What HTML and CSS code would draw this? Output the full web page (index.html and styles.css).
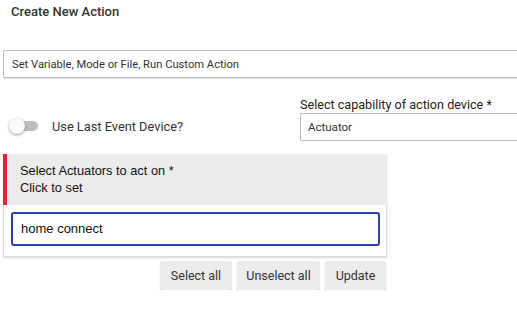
FILE: index.html
```html
<!DOCTYPE html>
<html lang="en">
<head>
    <meta charset="UTF-8">
    <title>Create New Action</title>
    <link rel="stylesheet" href="styles.css">
</head>
<body>
    <div class="page">
        <h1 class="title">Create New Action</h1>
        <div class="action-type">Set Variable, Mode or File, Run Custom Action</div>
        <div class="row">
            <div class="toggle-group">
                <span class="switch"><span class="knob"></span></span>
                <span class="toggle-label">Use Last Event Device?</span>
            </div>
            <div class="capability">
                <label class="field-label">Select capability of action device *</label>
                <div class="select-box">Actuator</div>
            </div>
        </div>
        <div class="device-panel">
            <div class="panel-header">
                <div>Select Actuators to act on *</div>
                <div>Click to set</div>
            </div>
            <div class="panel-body">
                <div class="search-input">home connect</div>
            </div>
        </div>
        <div class="buttons">
            <button class="btn btn-select">Select all</button>
            <button class="btn btn-unselect">Unselect all</button>
            <button class="btn btn-update">Update</button>
        </div>
    </div>
</body>
</html>
```

FILE: styles.css
```css
html, body {
    margin: 0;
    background: #fff;
    overflow: hidden;
}
body {
    font-family: Roboto, "Liberation Sans", sans-serif;
    color: #222;
}
.page {
    padding: 3px 0 0 3px;
}
.title {
    margin: 0 0 0 8px;
    font-size: 13px;
    font-weight: 500;
    line-height: 18px;
    color: #333;
}
.action-type {
    margin-top: 29px;
    height: 28px;
    box-sizing: border-box;
    border: 1px solid #bbb;
    border-right: none;
    border-radius: 2px 0 0 2px;
    box-shadow: 0 1px 1px rgba(0, 0, 0, 0.12);
    padding-left: 8px;
    font-size: 11.2px;
    line-height: 27px;
    color: #333;
}
.row {
    display: flex;
    align-items: flex-end;
    margin-top: 20px;
}
.toggle-group {
    flex-shrink: 0;
    width: 297px;
    height: 30px;
    display: flex;
    align-items: center;
}
.switch {
    position: relative;
    margin-left: 9px;
    width: 26px;
    height: 10px;
    border-radius: 5px;
    background: #bdbdbd;
}
.knob {
    position: absolute;
    left: -3px;
    top: -3px;
    width: 16px;
    height: 16px;
    border-radius: 50%;
    background: #fafafa;
    box-shadow: 0 1px 3px rgba(0, 0, 0, 0.4);
}
.toggle-label {
    margin-left: 14px;
    font-size: 12.8px;
    color: #333;
}
.capability {
    flex: 1;
    display: flex;
    flex-direction: column;
}
.field-label {
    font-size: 12.6px;
    line-height: 14px;
    color: #222;
}
.select-box {
    margin-top: 1px;
    height: 28px;
    box-sizing: border-box;
    border: 1px solid #bbb;
    border-right: none;
    border-radius: 2px 0 0 2px;
    padding-left: 7px;
    font-size: 11.5px;
    line-height: 26px;
    color: #333;
}
.device-panel {
    margin-top: 13px;
    width: 384px;
    box-shadow: 0 1px 2px rgba(0, 0, 0, 0.15);
}
.panel-header {
    background: #ececec;
    border-left: 4px solid #d9273b;
    height: 51px;
    box-sizing: border-box;
    padding: 8px 0 0 13px;
    font-family: "Liberation Sans", Arial, sans-serif;
    font-size: 12.8px;
    line-height: 17px;
    color: #111;
}
.panel-body {
    border: 1px solid #ddd;
    border-top: none;
    height: 52px;
    box-sizing: border-box;
    padding: 7px 6px 0 7px;
}
.search-input {
    height: 34px;
    box-sizing: border-box;
    border: 2px solid #2f3fa8;
    border-radius: 3px;
    padding-left: 8px;
    font-family: "Liberation Sans", Arial, sans-serif;
    font-size: 13px;
    line-height: 30px;
    color: #111;
}
.buttons {
    display: flex;
    gap: 5px;
    width: 383px;
    justify-content: flex-end;
    margin-top: 4px;
}
.btn {
    height: 29px;
    border: none;
    border-radius: 2px;
    background: #ececec;
    box-shadow: 0 2px 1px rgba(0, 0, 0, 0.25);
    font-family: Roboto, sans-serif;
    font-size: 12.5px;
    color: #333;
    padding: 0;
}
.btn-select {
    width: 72px;
}
.btn-unselect {
    width: 83px;
}
.btn-update {
    width: 61px;
}
```
